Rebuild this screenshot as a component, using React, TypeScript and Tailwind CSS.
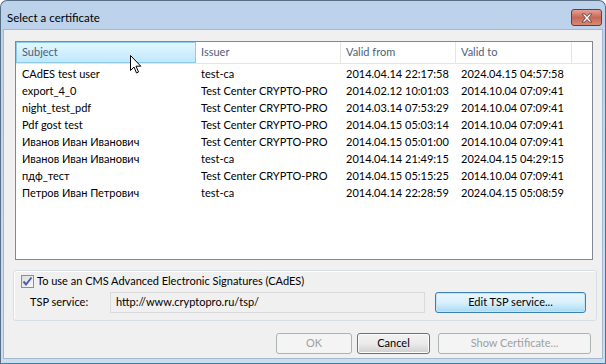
import React from 'react';

const rows = [
  ['CAdES test user', 'test-ca', '2014.04.14 22:17:58', '2024.04.15 04:57:58'],
  ['export_4_0', 'Test Center CRYPTO-PRO', '2014.02.12 10:01:03', '2014.10.04 07:09:41'],
  ['night_test_pdf', 'Test Center CRYPTO-PRO', '2014.03.14 07:53:29', '2014.10.04 07:09:41'],
  ['Pdf gost test', 'Test Center CRYPTO-PRO', '2014.04.15 05:03:14', '2014.10.04 07:09:41'],
  ['Иванов Иван Иванович', 'Test Center CRYPTO-PRO', '2014.04.15 05:01:00', '2014.10.04 07:09:41'],
  ['Иванов Иван Иванович', 'test-ca', '2014.04.14 21:49:15', '2024.04.15 04:29:15'],
  ['пдф_тест', 'Test Center CRYPTO-PRO', '2014.04.15 05:15:25', '2014.10.04 07:09:41'],
  ['Петров Иван Петрович', 'test-ca', '2014.04.14 22:28:59', '2024.04.15 05:08:59'],
];

const font = "font-['Lato','Noto_Sans',sans-serif]";

export default function App() {
  return (
    <div className={`w-[606px] h-[364px] bg-white text-[11px] text-black ${font}`}>
      <div className="relative flex flex-col w-full h-full rounded-t-[7px] border border-[#5a6e86] border-b-[#1c8dbd] bg-gradient-to-b from-[#bcd2ea] to-[#cadef2]">
        {/* Title bar */}
        <div className="flex items-start justify-between h-[28px] pl-[6px] pr-[3px]">
          <span className="mt-[11px] text-[11.5px] leading-none">Select a certificate</span>
          <button className="flex items-center justify-center w-[31px] h-[17px] mt-[8px] rounded-[3px] border border-[#6d3a35] bg-gradient-to-b from-[#e3a195] via-[#c9665a] to-[#d58a74]">
            <svg width="14" height="10" viewBox="0 0 14 10">
              <path d="M2 1 L5 1 L7 3.5 L9 1 L12 1 L8.5 5 L12 9 L9 9 L7 6.5 L5 9 L2 9 L5.5 5 Z" fill="#fff" stroke="#5a3530" strokeWidth="0.8" />
            </svg>
          </button>
        </div>

        {/* Client area */}
        <div className="flex-1 mx-[2px] mb-[4px] bg-[#f0f0f0] border border-[#a4b9cf] pt-[11px]">
          {/* List view */}
          <div className="ml-[11px] w-[578px] h-[219px] border border-[#828790] bg-white whitespace-nowrap">
            <div className="flex h-[22px] text-[#4c607a] border-b border-[#e5e5e5]">
              <div className="flex items-center w-[180px] pl-[5px] border border-[#8ccbea] bg-gradient-to-b from-[#e3f7ff] to-[#bfe7fc]">Subject</div>
              <div className="flex items-center w-[145px] pl-[5px] border-r border-[#e5e5e5]">Issuer</div>
              <div className="flex items-center w-[115px] pl-[5px] border-r border-[#e5e5e5]">Valid from</div>
              <div className="flex items-center w-[116px] pl-[5px] border-r border-[#e5e5e5]">Valid to</div>
              <div className="flex-1" />
            </div>
            <div className="mt-[2px]">
              {rows.map((r, i) => (
                <div key={i} className="flex h-[17px] items-center">
                  <div className="w-[180px] pl-[6px] overflow-hidden">{r[0]}</div>
                  <div className="w-[145px] pl-[5px] overflow-hidden">{r[1]}</div>
                  <div className="w-[115px] pl-[5px] overflow-hidden">{r[2]}</div>
                  <div className="w-[116px] pl-[5px] overflow-hidden">{r[3]}</div>
                </div>
              ))}
            </div>
          </div>

          {/* CAdES group */}
          <div className="ml-[9px] mt-[10px] w-[584px] h-[51px] rounded-[3px] border border-[#d5dfe5] shadow-[inset_1px_1px_0_#fff] pl-[7px] pt-[2px]">
            <label className="flex items-center h-[16px] gap-[3px]">
              <span className="flex items-center justify-center w-[13px] h-[13px] border border-[#8e8f8f] bg-gradient-to-br from-[#dcdcdc] to-[#fafafa]">
                <svg width="11" height="11" viewBox="0 0 11 11">
                  <path d="M1.5 5.5 L4 8.5 L9.5 1.5" fill="none" stroke="#4a5fa8" strokeWidth="2" />
                </svg>
              </span>
              <span>To use an CMS Advanced Electronic Signatures (CAdES)</span>
            </label>
            <div className="flex items-center mt-[3px]">
              <span className="w-[89px] pl-[9px]">TSP service:</span>
              <div className="flex items-center w-[315px] h-[21px] border border-[#dadada] bg-[#f0f0f0] pl-[5px]">http://www.cryptopro.ru/tsp/</div>
              <button className="ml-[10px] w-[151px] h-[21px] rounded-[3px] border border-[#3c7fb1] bg-gradient-to-b from-[#eaf6fd] via-[#d9f0fc] to-[#a7d9f5] shadow-[inset_0_0_0_1px_#c4e5f6]">
                Edit TSP service...
              </button>
            </div>
          </div>

          {/* Dialog buttons */}
          <div className="flex justify-end gap-[5px] mt-[12px] pr-[11px]">
            <button className="w-[76px] h-[21px] rounded-[3px] border border-[#adb2b5] bg-[#f4f4f4] text-[#a0a0a0]">OK</button>
            <button className="w-[73px] h-[21px] rounded-[3px] border border-[#707070] bg-gradient-to-b from-[#f2f2f2] via-[#ebebeb] to-[#cfcfcf] shadow-[inset_0_0_0_1px_#fcfcfc]">Cancel</button>
            <button className="ml-[3px] w-[153px] h-[21px] rounded-[3px] border border-[#adb2b5] bg-[#f4f4f4] text-[#a0a0a0]">Show Certificate...</button>
          </div>
        </div>

        {/* Mouse pointer over header */}
        <svg className="absolute left-[129px] top-[54px]" width="12" height="19" viewBox="0 0 12 19">
          <path d="M0.5 0.5 L0.5 15.5 L4 12 L6.5 18 L8.5 17 L6 11.2 L10.8 11.2 Z" fill="#fff" stroke="#000" strokeWidth="1" />
        </svg>
      </div>
    </div>
  );
}
